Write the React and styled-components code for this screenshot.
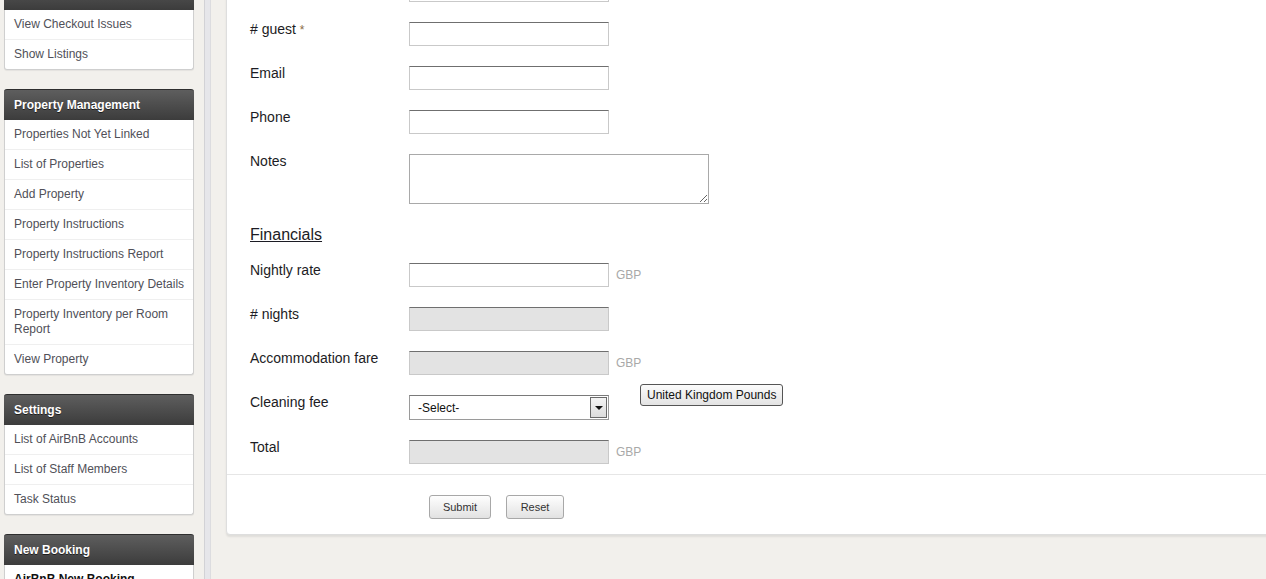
import React from 'react'
import styled, { createGlobalStyle } from 'styled-components'

const GlobalStyle = createGlobalStyle`
  html, body {
    margin: 0;
    padding: 0;
    background: #f2f0ec;
    font-family: "Liberation Sans", Arial, sans-serif;
    overflow: hidden;
  }
`

const Layout = styled.div`
  display: flex;
  align-items: flex-start;
  min-height: 700px;
`

const Sidebar = styled.aside`
  width: 190px;
  flex-shrink: 0;
  margin: -21px 10px 0 4px;
`

const Divider = styled.div`
  align-self: stretch;
  width: 5px;
  flex-shrink: 0;
  margin-top: -22px;
  background: #e6e6ea;
  border-left: 1px solid #d2d2d6;
  border-right: 1px solid #dcdcdf;
`

const Panel = styled.section`
  margin-bottom: 19px;
  background: #fff;
  border: 1px solid #cfcfcf;
  border-top: none;
  border-radius: 3px;
  box-shadow: 0 1px 1px rgba(0,0,0,0.06);
`

const PanelHeader = styled.h3`
  margin: 0 -1px;
  height: 30px;
  line-height: 30px;
  padding: 0 10px;
  font-size: 12px;
  font-weight: bold;
  color: #fff;
  text-shadow: 0 1px 0 rgba(0,0,0,0.6);
  background: linear-gradient(#5e5e5e, #3c3c3c);
  border-top: 1px solid #2e2e2e;
  border-radius: 3px 3px 0 0;
`

const NavItem = styled.a`
  display: block;
  padding: 7px 2px 7px 9px;
  line-height: 15px;
  font-size: 12px;
  color: ${(props) => (props.$active ? '#111' : '#505058')};
  font-weight: ${(props) => (props.$active ? 'bold' : 'normal')};
  border-bottom: 1px solid #efefef;
  text-decoration: none;
  &:last-child { border-bottom: none; }
`

const Main = styled.main`
  flex: 1;
  padding-left: 15px;
  margin-right: -12px;
`

const Card = styled.div`
  margin-top: -43px;
  background: #fff;
  border: 1px solid #dedede;
  border-radius: 4px;
  box-shadow: 0 2px 2px rgba(0,0,0,0.08);
`

const Fields = styled.div`
  padding: 20px 23px 10px;
`

const Row = styled.div`
  position: relative;
  display: flex;
  align-items: flex-start;
  margin-bottom: 20px;
  &:last-child { margin-bottom: 0; }
`

const Label = styled.label`
  width: 159px;
  flex-shrink: 0;
  font-size: 14px;
  line-height: 14px;
  color: #1c1c24;
`

const Required = styled.span`
  color: #8b6a45;
  font-size: 12px;
`

const Input = styled.input`
  box-sizing: border-box;
  width: 200px;
  height: 24px;
  margin: 0;
  padding: 2px 4px;
  font: 12px "Liberation Sans", Arial, sans-serif;
  background: ${(props) => (props.disabled ? '#e3e3e3' : '#fff')};
  border: 1px solid #c9c9c9;
  border-top-color: #6f6f6f;
  outline: none;
`

const TextArea = styled.textarea`
  box-sizing: border-box;
  width: 300px;
  height: 50px;
  margin: 0;
  font: 12px "Liberation Sans", Arial, sans-serif;
  border: 1px solid #a9a9a9;
  outline: none;
`

const Unit = styled.span`
  margin-left: 7px;
  font-size: 12px;
  color: #a8a8a8;
  align-self: center;
`

const SectionTitle = styled.h4`
  margin: 0 0 20px;
  font-size: 16px;
  line-height: 19px;
  font-weight: normal;
  color: #1c1c24;
  text-decoration: underline;
  padding-top: 1px;
  margin-bottom: 19px;
`

const Select = styled.div`
  box-sizing: border-box;
  width: 200px;
  height: 25px;
  display: flex;
  align-items: center;
  justify-content: space-between;
  padding: 0 1px 0 8px;
  font-size: 12px;
  color: #111;
  background: #fff;
  border: 1px solid #9a9a9a;
  border-top-color: #7a7a7a;
`

const SelectArrow = styled.span`
  box-sizing: border-box;
  width: 17px;
  height: 21px;
  display: flex;
  align-items: center;
  justify-content: center;
  background: linear-gradient(#f4f4f4, #dcdcdc);
  border: 1px solid #6a6a6a;
  &::after {
    content: '';
    border-left: 4px solid transparent;
    border-right: 4px solid transparent;
    border-top: 4px solid #111;
  }
`

const Tip = styled.span`
  position: absolute;
  left: 390px;
  top: -11px;
  height: 20px;
  line-height: 20px;
  padding: 0 6px;
  font-size: 12px;
  color: #111;
  white-space: nowrap;
  background: linear-gradient(#fbfbfb, #e3e3e3);
  border: 1px solid #555;
  border-radius: 3px;
`

const Footer = styled.div`
  display: flex;
  gap: 15px;
  padding: 20px 0 15px 202px;
  border-top: 1px solid #e6e6e6;
`

const Button = styled.button`
  box-sizing: border-box;
  width: ${(props) => props.$w}px;
  height: 24px;
  padding: 0;
  font: 11px "Liberation Sans", Arial, sans-serif;
  color: #333;
  background: linear-gradient(#fefefe, #e2e2e2);
  border: 1px solid #a8a8a8;
  border-radius: 3px;
`

const menus = [
  { title: 'Checkout', items: ['View Checkout Issues', 'Show Listings'] },
  {
    title: 'Property Management',
    items: [
      'Properties Not Yet Linked',
      'List of Properties',
      'Add Property',
      'Property Instructions',
      'Property Instructions Report',
      'Enter Property Inventory Details',
      'Property Inventory per Room Report',
      'View Property',
    ],
  },
  { title: 'Settings', items: ['List of AirBnB Accounts', 'List of Staff Members', 'Task Status'] },
  { title: 'New Booking', items: ['AirBnB New Booking', 'Direct Booking'], active: 0 },
]

function App() {
  return (
    <>
      <GlobalStyle />
      <Layout>
        <Sidebar>
          {menus.map((m) => (
            <Panel key={m.title}>
              <PanelHeader>{m.title}</PanelHeader>
              {m.items.map((it, i) => (
                <NavItem key={it} href="#" $active={m.active === i}>{it}</NavItem>
              ))}
            </Panel>
          ))}
        </Sidebar>
        <Divider />
        <Main>
          <Card>
            <Fields>
              <Row>
                <Label>Check-out date</Label>
                <Input />
              </Row>
              <Row>
                <Label># guest <Required>*</Required></Label>
                <Input />
              </Row>
              <Row>
                <Label>Email</Label>
                <Input />
              </Row>
              <Row>
                <Label>Phone</Label>
                <Input />
              </Row>
              <Row>
                <Label>Notes</Label>
                <TextArea />
              </Row>
              <SectionTitle>Financials</SectionTitle>
              <Row>
                <Label>Nightly rate</Label>
                <Input />
                <Unit>GBP</Unit>
              </Row>
              <Row>
                <Label># nights</Label>
                <Input disabled />
              </Row>
              <Row>
                <Label>Accommodation fare</Label>
                <Input disabled />
                <Unit>GBP</Unit>
              </Row>
              <Row>
                <Label>Cleaning fee</Label>
                <Select>
                  -Select-
                  <SelectArrow />
                </Select>
                <Tip>United Kingdom Pounds</Tip>
              </Row>
              <Row>
                <Label>Total</Label>
                <Input disabled />
                <Unit>GBP</Unit>
              </Row>
            </Fields>
            <Footer>
              <Button $w={62}>Submit</Button>
              <Button $w={58}>Reset</Button>
            </Footer>
          </Card>
        </Main>
      </Layout>
    </>
  )
}

export default App
